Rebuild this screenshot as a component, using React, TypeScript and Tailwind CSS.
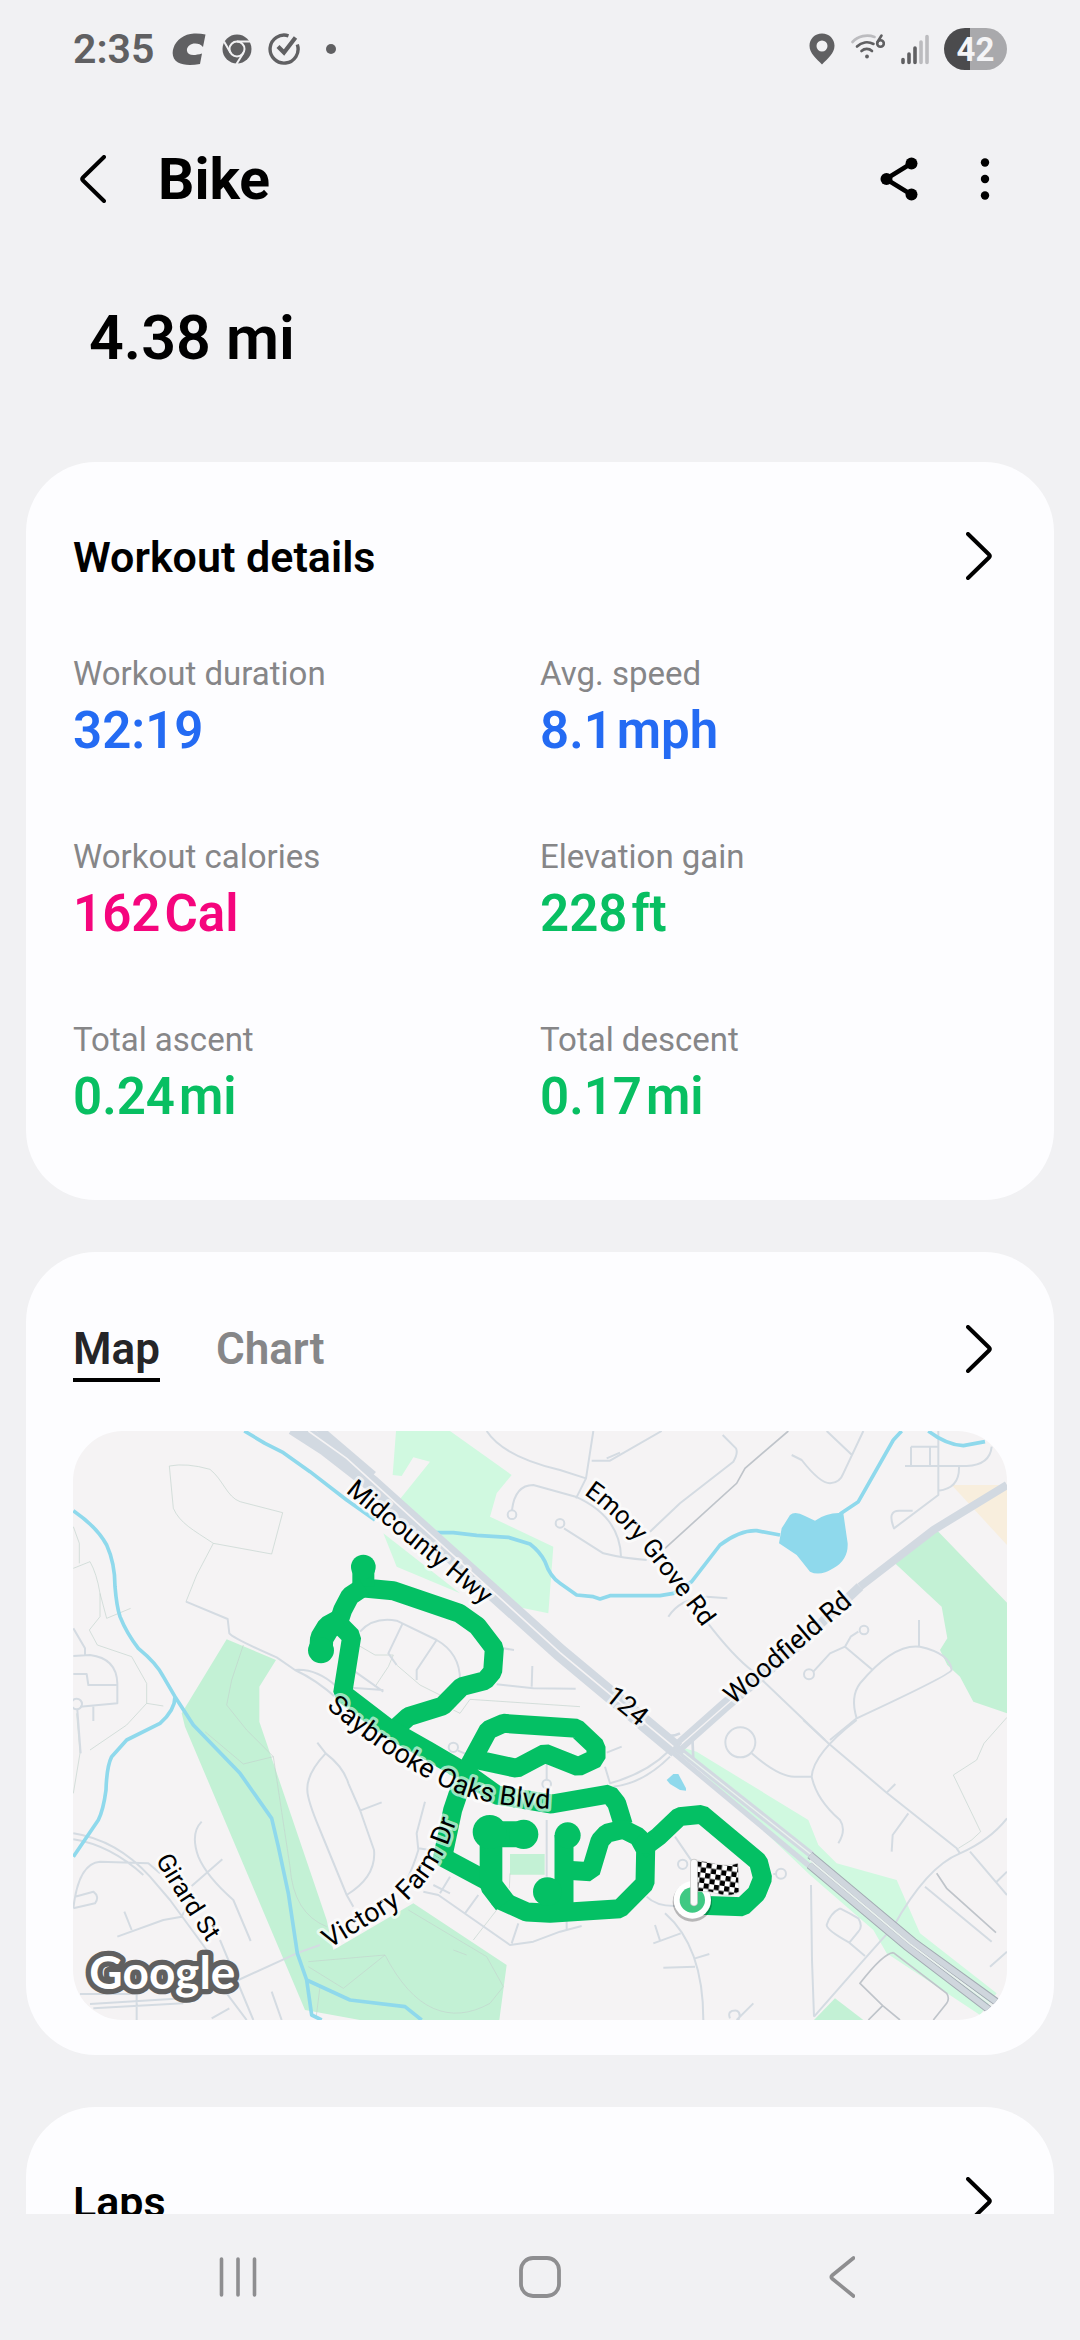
import { useState } from "react";
import type { ReactNode } from "react";

type Stat = { label: string; value: string; unit?: string; color: string };

const stats: Stat[] = [
  { label: "Workout duration", value: "32:19", color: "text-[#246bf3]" },
  { label: "Avg. speed", value: "8.1", unit: "mph", color: "text-[#246bf3]" },
  { label: "Workout calories", value: "162", unit: "Cal", color: "text-[#f5057d]" },
  { label: "Elevation gain", value: "228", unit: "ft", color: "text-[#08bf62]" },
  { label: "Total ascent", value: "0.24", unit: "mi", color: "text-[#08bf62]" },
  { label: "Total descent", value: "0.17", unit: "mi", color: "text-[#08bf62]" },
];

const StatusBar = () => (
  <div className="flex h-[98px] shrink-0 items-center justify-between px-[73px] text-[#606062]">
    <div className="flex items-center">
      <span className="text-[41px] leading-none font-semibold">2:35</span>
      <svg className="ml-[18px] h-8 w-[34px]" viewBox="0 0 34 32" fill="currentColor">
        <path d="M33.500 1.500 31 14C29 11 25 10 21.500 10.500 17 11.500 14.500 14.500 15 18c.8 4.500 6.500 5 15 2.500L28 31c-9 1.500-17 1.300-22-1.500C1 26.500-.5 21 1.500 15 4 7 12 1 22 .5c4-.2 8 .2 11.500 1z" />
      </svg>
      <svg className="ml-4 size-[30px]" viewBox="0 0 30 30" fill="none">
        <circle cx="15" cy="15" r="14.500" fill="currentColor" />
        <circle cx="15" cy="15" r="7.500" stroke="#f1f1f3" strokeWidth="2" />
        <path d="M15 7.500h14M8.500 18.800 2 7.500M21.500 18.800 14.500 30" stroke="#f1f1f3" strokeWidth="2" />
      </svg>
      <svg className="ml-4 size-8" viewBox="0 0 32 32" fill="none" stroke="currentColor" strokeWidth="3.400">
        <path d="M20.500 2.800A14 14 0 1 0 29.300 11.500" />
        <path d="m10 13.500 6 6L27.500 4.500" strokeWidth="4.200" />
      </svg>
      <span className="ml-[26px] size-2.5 rounded-full bg-current" />
    </div>
    <div className="flex items-center">
      <svg className="h-8 w-[26px]" viewBox="0 0 26 32" fill="currentColor">
        <path fillRule="evenodd" d="M13 .5C5.800.5.500 6 .5 12.800.5 20 7.500 26 13 31.500 18.500 26 25.500 20 25.500 12.800 25.500 6 20.200.5 13 .5zm0 7a5.500 5.500 0 1 1 0 11 5.500 5.500 0 0 1 0-11z" />
      </svg>
      <svg className="ml-4 h-8 w-[34px]" viewBox="0 0 34 32" fill="none" stroke="currentColor" strokeWidth="2.600" strokeLinecap="round">
        <path d="M1.500 9C7 3 16 1 23.500 4" stroke="#bcbcbf" />
        <path d="M6 13.500c4.500-4.500 11-5.500 16.500-2.500M10.500 18c3-2.800 7.500-2.800 10.500 0" />
        <circle cx="16" cy="23.500" r="1.900" fill="currentColor" stroke="none" />
        <circle cx="29.500" cy="10.500" r="3.300" />
        <path d="M26.500 9 30.500 2.500" />
      </svg>
      <svg className="ml-4 h-8 w-7" viewBox="0 0 28 32" strokeWidth="3.600" strokeLinecap="round" stroke="currentColor">
        <path d="M2 26.500v3M8 21v8.500M14 15v14.500" />
        <path d="M20 9v20.500M26 3.500v26" stroke="#bcbcbf" />
      </svg>
      <div className="ml-[15px] flex h-[42px] w-[63px] items-center justify-center rounded-full bg-linear-to-r from-[#4b4b4d] from-42% to-[#a9a9ac] to-42% text-[33px] leading-none font-bold text-[#f4f4f6]">
        42
      </div>
    </div>
  </div>
);

const Chevron = () => (
  <svg className="h-12 w-[26px]" viewBox="0 0 26 48" fill="none" stroke="currentColor" strokeWidth="4" strokeLinecap="round" strokeLinejoin="round">
    <path d="M2 2 23 22.500q1.500 1.500 0 3L2 46" />
  </svg>
);

const MoreButton = ({ label }: { label: string }) => (
  <button type="button" aria-label={label} className="flex h-16 items-center pr-[15px] text-black">
    <Chevron />
  </button>
);

const Header = () => (
  <header className="flex h-[162px] shrink-0 items-center pr-[72px] pl-[80px] text-black">
    <button type="button" aria-label="Back" className="rotate-180">
      <Chevron />
    </button>
    <h1 className="ml-[52px] text-[57px] leading-none font-bold">Bike</h1>
    <button type="button" aria-label="Share" className="ml-auto">
      <svg className="h-11 w-[38px]" viewBox="0 0 38 44" fill="currentColor" stroke="currentColor">
        <path d="M6 22 32 6M6 22l26 16" strokeWidth="4.500" fill="none" />
        <circle cx="6.500" cy="22" r="6" stroke="none" />
        <circle cx="31.500" cy="6.500" r="6" stroke="none" />
        <circle cx="31.500" cy="37.500" r="6" stroke="none" />
      </svg>
    </button>
    <button type="button" aria-label="More options" className="mr-[18px] ml-[62px]">
      <svg className="h-11 w-2.5" viewBox="0 0 10 44" fill="currentColor">
        <circle cx="5" cy="5.500" r="4.200" />
        <circle cx="5" cy="22" r="4.200" />
        <circle cx="5" cy="38.500" r="4.200" />
      </svg>
    </button>
  </header>
);

const Card = ({ children, className }: { children: ReactNode; className: string }) => (
  <section className={`mx-[26px] shrink-0 rounded-[70px] bg-[#fdfdff] px-[47px] ${className}`}>{children}</section>
);

const CardTitle = ({ title }: { title: string }) => (
  <div className="flex h-16 items-center justify-between">
    <h2 className="pt-0.5 text-[43px] leading-none font-semibold text-black">{title}</h2>
    <MoreButton label={`Open ${title}`} />
  </div>
);

const labels = [
  { id: "midcounty", text: "Midcounty Hwy", size: 78, d: "M856 216 1165 470 1350 620" },
  { id: "emory", text: "Emory Grove Rd", size: 76, d: "M1571 222Q1670 290 1762 405T1960 665" },
  { id: "woodfield", text: "Woodfield Rd", size: 80, d: "M2020 856 2400 534" },
  { id: "route124", text: "124", size: 80, d: "M1632 836 1760 940" },
  { id: "saybrooke", text: "Saybrooke Oaks Blvd", size: 81, d: "M798 862C900 950 1000 1020 1100 1075S1290 1165 1540 1168" },
  { id: "girard", text: "Girard St", size: 76, d: "M286 1320Q350 1430 470 1610" },
  { id: "victory", text: "Victory Farm Dr", size: 81, d: "M808 1586 1040 1445Q1120 1370 1165 1270L1210 1150" },
];

const RouteMap = () => (
  <svg className="block w-full rounded-[50px] bg-[#f5f3f4]" viewBox="39 33 2802 1767" role="img" aria-label="Workout route map">
    <defs>
      <pattern id="checks" width="31" height="31" patternUnits="userSpaceOnUse" patternTransform="translate(470 424) rotate(8)">
        <rect width="31" height="31" fill="#fff" />
        <path d="M0 0h15.500v15.500H0zM15.500 15.500H31V31H15.500z" fill="#000" />
      </pattern>
    </defs>

    {/* parks */}
    <g fill="#d0f9e0">
      <path d="M1008 33H1170L1355 165 1310 220 1290 290 1480 380 1465 580 1370 560 1120 335 1010 250 1110 125 1060 112 1025 168 998 165z" />
      <path d="M970 340 1200 520 1010 440 1000 415z" />
      <path d="M1840 975 1910 995 2245 1200 2275 1275 2330 1330 2510 1380 2580 1540 2810 1720 2760 1785 2480 1600 2440 1530 2250 1365z" />
    </g>
    <g fill="#c3f1d5">
      <path d="M500 658 648 720 598 800V905L800 1500 820 1590 1060 1450 1340 1635 1318 1800H900L735 1770 375 920 365 880z" />
      <path d="M2622 322 2841 548V880L2740 845 2700 770 2662 735 2640 690 2662 655 2645 560 2500 425z" />
      <path d="M2325 1735 2410 1800H2262z" />
      <path d="M1350 1302h104v62H1350z" />
    </g>
    <path d="M2675 195H2841V375z" fill="#f8eedd" />

    {/* footpaths */}
    <g fill="none" stroke="#c3d3cd" strokeWidth="2">
      <path d="M328 138Q380 128 450 148C490 180 500 230 540 245L668 278 635 402 460 370C400 330 360 310 340 265L328 138M460 370 410 465 378 545" />
      <path d="M40 445 90 425Q110 460 120 520L140 595 212 565M120 520V590L88 630 112 675 215 710 260 790V850L200 915 90 990M260 850 310 858" />
      <path d="M550 675 515 780 500 855 560 930 640 1010 550 1032 435 935M640 1010 690 1340Q700 1480 800 1520" />
      <path d="M745 1625 975 1605Q1040 1730 1120 1765T1290 1750L1330 1700 1280 1610 1045 1470M745 1640 850 1705 975 1605M1180 1590 1220 1605M780 1700 768 1795" />
      <path d="M885 670 945 705H1000L985 740 945 800M1010 735 1080 795 1140 825M1180 870 1200 880 1230 838 1560 860" />
      <path d="M2841 892 2772 970 2750 1020 2680 1065 2762 1235 2735 1260 2695 1285" />
      <path d="M1348 1405 1350 1360M1240 1560 1310 1470M40 320 58 370V430M40 1120 60 1000 50 880" />
    </g>

    {/* streets */}
    <g fill="none" stroke="#d4dbe2" strokeWidth="6" strokeLinejoin="round">
      <path d="M378 545 503 597 508 640Q520 655 650 712L705 750Q770 745 830 800L970 810M705 750Q770 780 830 835M885 755 970 815" />
      <path d="M900 635Q940 590 1010 602L1130 660Q1200 700 1200 780M1028 610 985 700 1010 735M1130 660 1070 750V780M1330 685 1362 690M1310 793 1420 805 1547 806M1417 738 1415 800" />
      <path d="M40 708 90 705Q170 715 172 790V850L60 860M40 762H80L85 795H172M100 860V903M40 625 75 685V705M52 870 62 1000" />
      <circle cx="50" cy="852" r="16" />
      <path d="M1280 33Q1330 110 1500 150L1578 175M1356 270Q1365 195 1420 195L1547 230Q1680 290 1683 410M1548 235 1578 175 1600 33M1595 122H1650L1805 33" />
      <circle cx="1356" cy="284" r="13" />
      <circle cx="1500" cy="310" r="13" />
      <path d="M1512 325 1630 400Q1690 415 1760 420M1988 45 2028 85Q2035 100 2020 125L1860 250 1770 335M2195 105 2225 120Q2280 190 2310 190 2340 188 2350 160L2410 33M2300 33 2376 105" />
      <path d="M1825 590Q1860 535 1940 530L2002 535M1940 605Q2020 710 2080 755L2295 960M2535 138H2720Q2790 135 2795 80M2553 80h82v58M2553 80v58M2610 80v58M2635 33V225L2502 325Q2480 270 2520 272H2558M2697 138Q2700 205 2635 212" />
      <path d="M2260 755 2310 700 2355 680 2438 750M2355 680 2372 650 2395 635M2310 960 2390 895Q2370 830 2400 790 2500 670 2580 680 2670 700 2675 750 2670 765 2390 895M2577 680V600" />
      <circle cx="2247" cy="763" r="15" />
      <circle cx="2412" cy="630" r="13" />
      <circle cx="2041" cy="967" r="45" />
      <path d="M2075 1000Q2160 1075 2210 1070H2255M2230 900 2305 970 2480 1118 2690 1285 2700 1300M2480 1118 2506 1092M2390 900Q2260 1000 2255 1070 2270 1140 2340 1200 2360 1230 2335 1270M2545 1180 2498 1245 2495 1295" />
      <path d="M2841 1195Q2790 1260 2700 1300 2600 1340 2500 1520L2420 1610 2262 1790M2253 1395 2256 1620 2262 1790M2595 1400 2795 1565M2730 1295 2841 1425M2790 1640 2841 1595M2810 1385 2841 1355" />
      <path d="M2340 1465Q2370 1480 2395 1495 2410 1520 2395 1535L2368 1568Q2300 1530 2300 1515 2310 1480 2340 1465M2368 1568 2415 1608M1680 98 1640 115" />
      <path d="M1685 980 1640 998M1635 1040 1650 1090Q1760 1060 1830 990M1660 1100Q1750 1090 1830 1010M1845 1250 1900 1330M1760 1430Q1790 1460 1850 1458M1815 1480Q1930 1580 1930 1800M1785 1515 1800 1562M1780 1570 1862 1540M1905 1615 1948 1602M1810 1643 1905 1640" />
      <circle cx="1868" cy="1333" r="14" />
      <circle cx="2163" cy="1361" r="15" />
      <path d="M2140 1362h8M1460 1030V1080M1460 1200V1370M2080 1750 2030 1800M2010 1795Q2000 1770 2030 1772 2045 1780 2035 1800" />
      <circle cx="1460" cy="1092" r="13" />
      <circle cx="1180" cy="982" r="14" />
      <path d="M1194 992 1225 1005M772 968 797 1000Q740 1060 742 1110 742 1140 780 1230L860 1425 880 1460M797 1000Q850 1040 865 1090L900 1170 942 1290Q950 1370 860 1425M900 1172 965 1147M1095 1145 1070 1240 1075 1290Q1060 1340 1040 1380M1075 1285 1110 1290" />
      <path d="M1090 1415 1135 1425 1350 1575 1420 1565 1500 1535 1565 1518M1140 1420 1170 1370M1215 1480 1255 1425M1355 1570 1375 1510M1120 1395 1170 1420M1520 1500V1530" />
      <path d="M40 1240Q170 1260 270 1370L330 1440 440 1590 500 1720 560 1800M40 1258Q150 1275 250 1365M480 1560 580 1800M40 1465Q55 1330 120 1325L265 1330 300 1360M40 1465 105 1450Q120 1430 100 1415L45 1430M193 1475 215 1530M172 1550 310 1500 365 1490 400 1420M425 1205Q390 1240 415 1310 440 1370 520 1440L572 1563M395 1398 487 1318M535 1680 715 1598 780 1575" />
      <path d="M60 1722H230V1800M100 1765 370 1750M90 1752 370 1735M635 1715 665 1800M455 1795 508 1765" />
    </g>
    <g fill="none" stroke="#bfc4ca" strokeWidth="5">
      <path d="M2185 33 2055 145 2030 190 1815 385M2630 1360 2660 1405 2808 1538M2500 1598Q2470 1600 2400 1690L2468 1757 2520 1800M2500 1598 2660 1720Q2670 1735 2660 1750L2620 1800M2468 1757 2425 1800" />
    </g>

    {/* water */}
    <g fill="none" stroke="#8fd9ec" strokeWidth="11" strokeLinejoin="round">
      <path d="M553 33 615 70 670 98 750 155 860 240 945 300M1115 338 1180 338 1250 346 1345 352 1410 372Q1440 395 1455 425 1470 470 1500 490L1550 525 1600 530 1620 537 1650 527H1800L1840 520 1895 485 1980 375Q2040 330 2090 332L2160 345M2340 282 2395 245 2500 60 2525 33M2605 33Q2660 75 2710 77L2775 65" />
      <path d="M40 272Q110 320 140 375 165 430 165 500 170 560 180 590 200 640 235 685 290 730 310 770L345 830 400 915 540 1060 635 1195 655 1280 685 1420 712 1600 740 1680 755 1785 785 1800M345 830Q345 870 300 910L200 960 155 1010Q140 1040 138 1110 130 1170 115 1200L40 1310M740 1680 870 1740 1035 1760 1085 1800" />
    </g>
    <g fill="#8fd9ec">
      <path d="M2190 285Q2205 272 2235 288L2265 302Q2305 275 2350 280L2363 370Q2365 420 2320 445 2280 470 2250 455 2230 430 2210 405L2157 370 2165 325z" />
      <path d="M1820 1080 1840 1062H1855L1878 1105V1112L1860 1110 1830 1092z" />
    </g>

    {/* highways */}
    <g fill="none" stroke="#d2d9e1">
      <path d="M2841 195 2620 330 2400 500" strokeWidth="24" />
      <path d="M2400 500 2240 650" strokeWidth="28" />
      <path d="M2240 650 1990 860 1850 985" strokeWidth="38" />
      <path d="M2040 818 1855 980" stroke="#f5f3f4" strokeWidth="4" />
      <path d="M1897 950 1900 1020M1800 940Q1830 955 1860 940" strokeWidth="8" />
      <path d="M700 20 800 85 935 190 1500 698 1850 990" strokeWidth="50" />
      <path d="M770 20 940 165" strokeWidth="24" />
      <path d="M745 33 860 115 1500 698 1840 980" stroke="#f5f3f4" strokeWidth="5" />
      <path d="M1845 980 2255 1305" strokeWidth="22" />
      <path d="M1870 1000 2255 1305" stroke="#eaf3ee" strokeWidth="4" />
      <path d="M1830 990 2250 1340" strokeWidth="16" />
      <path d="M2250 1305 2560 1565 2815 1750M2248 1335 2540 1580 2795 1775" stroke="#a3abb3" strokeWidth="24" />
      <path d="M2250 1305 2560 1565 2815 1750M2248 1335 2540 1580 2795 1775" stroke="#cfd6dd" strokeWidth="18" />
      <path d="M2249 1320 2550 1572 2805 1762" stroke="#e9f0ee" strokeWidth="5" />
    </g>

    {/* recorded route */}
    <g fill="none" stroke="#04c064" strokeWidth="57" strokeLinejoin="bevel">
      <path d="M910 440 912 504 1000 512 1198 580 1252 618 1303 685 1298 755 1275 782 1205 800 1148 858 1045 890 985 945" />
      <path d="M910 440V500" strokeWidth="66" />
      <path d="M912 500 870 528 848 570 835 610 875 650 848 820 985 925 1100 990 1220 1060 1310 1125 1475 1152 1648 1122 1670 1150 1690 1215" />
      <path d="M845 600 805 622 785 655 783 690" strokeWidth="70" />
      <path d="M1145 1325 1178 1170 1215 1060 1285 930 1330 910 1550 925 1608 980 1608 1015 1555 1040 1455 1000 1370 1045 1230 1015" />
      <path d="M1145 1310 1295 1390 1320 1440 1400 1476 1470 1480 1680 1466 1755 1390 1757 1290 1735 1250 1690 1228 1640 1240 1620 1262 1592 1355 1510 1350" />
      <path d="M1293 1230V1395L1335 1450" strokeWidth="68" />
      <path d="M1285 1243H1390" strokeWidth="78" />
      <path d="M1465 1415H1530" strokeWidth="74" />
      <path d="M1512 1245V1470" />
      <path d="M1740 1290 1795 1250 1858 1190 1925 1183 2095 1325 2108 1375 2090 1420 2048 1460 1900 1455" />
    </g>
    <g fill="#04c064">
      <circle cx="910" cy="441" r="37" />
      <circle cx="783" cy="691" r="39" />
      <circle cx="1289" cy="1236" r="51" />
      <circle cx="1391" cy="1243" r="44" />
      <circle cx="1523" cy="1246" r="39" />
      <circle cx="1462" cy="1415" r="43" />
      <circle cx="1755" cy="1272" r="30" />
    </g>

    {/* street names */}
    <g fill="#000" stroke="#fff" strokeOpacity=".62" strokeWidth="18" strokeLinejoin="round" style={{ paintOrder: "stroke" }}>
      {labels.map(({ id, text, size, d }) => (
        <g key={id}>
          <path id={id} d={d} fill="none" stroke="none" />
          <text fontSize={size}>
            <textPath href={`#${id}`}>{text}</textPath>
          </text>
        </g>
      ))}
    </g>

    {/* finish marker */}
    <g transform="translate(1440 900)">
      <circle cx="457" cy="546" r="59" fill="#000" fillOpacity=".25" />
      <circle cx="457" cy="540" r="56" fill="#fff" />
      <circle cx="457" cy="540" r="38" fill="#3fc983" />
      <path d="M468 420Q500 425 530 433 565 440 594 430L597 515Q580 530 545 524 510 512 470 514z" fill="url(#checks)" stroke="#d5d5d5" strokeWidth="2" />
      <path d="M462 428V547" stroke="#cdcdcd" strokeWidth="23" strokeLinecap="round" />
      <path d="M462 428V547" stroke="#fafafa" strokeWidth="18" strokeLinecap="round" />
    </g>

    <text x="88" y="1707" fontSize="138" fontFamily="Lato, sans-serif" fontWeight="700" fill="#fff" stroke="#606060" strokeWidth="32" strokeLinejoin="round" style={{ paintOrder: "stroke" }}>
      Google
    </text>
  </svg>
);

const tabs = ["Map", "Chart"];

const MapCard = () => {
  const [active, setActive] = useState("Map");
  return (
    <Card className="mt-[52px] pt-16 pb-[35px]">
      <div className="flex h-[66px] items-center justify-between">
        <div role="tablist" className="flex h-full gap-14">
          {tabs.map((tab) => (
            <button
              key={tab}
              type="button"
              role="tab"
              aria-selected={tab === active}
              onClick={() => setActive(tab)}
              className={`h-full border-b-4 pt-1 text-[44px] leading-none font-semibold ${
                tab === active ? "border-black text-[#252528]" : "border-transparent text-[#868688]"
              }`}
            >
              {tab}
            </button>
          ))}
        </div>
        <MoreButton label="Open map" />
      </div>
      <div className="mt-[49px]">
        <RouteMap />
      </div>
    </Card>
  );
};

const NavBar = () => (
  <nav className="grid h-[126px] shrink-0 grid-cols-3 items-center justify-items-center bg-[#f1f1f3] px-[87px] text-[#8e8e90]">
    <button type="button" aria-label="Recents">
      <svg className="h-[42px] w-10" viewBox="0 0 40 42" stroke="currentColor" strokeWidth="3.600" strokeLinecap="round">
        <path d="M3.500 3v36M20 3v36M36.500 3v36" />
      </svg>
    </button>
    <button type="button" aria-label="Home">
      <svg className="size-[42px]" viewBox="0 0 42 42" fill="none" stroke="currentColor" strokeWidth="3.800">
        <rect x="2" y="2" width="38" height="38" rx="12" />
      </svg>
    </button>
    <button type="button" aria-label="Back">
      <svg className="h-[42px] w-[26px]" viewBox="0 0 26 42" fill="none" stroke="currentColor" strokeWidth="3.600" strokeLinecap="round" strokeLinejoin="round">
        <path d="M24.500 2 3 19.500q-1.500 1.500 0 3L24.500 40" />
      </svg>
    </button>
  </nav>
);

export default function App() {
  return (
    <div className="flex h-screen flex-col overflow-hidden bg-[#f1f1f3] font-[Roboto,'Noto_Sans',sans-serif]">
      <StatusBar />
      <Header />
      <main className="flex min-h-0 flex-1 flex-col overflow-x-hidden overflow-y-auto [scrollbar-width:none]">
        <p className="px-[89px] pt-[42px] pb-[88px] text-[61px] leading-[72px] font-semibold text-black">4.38 mi</p>
        <Card className="pt-[62px] pb-[69px]">
          <CardTitle title="Workout details" />
          <dl className="mt-[63px] grid grid-cols-2 gap-y-[69px]">
            {stats.map(({ label, value, unit, color }) => (
              <div key={label}>
                <dt className="text-[33px] leading-[46px] text-[#868688]">{label}</dt>
                <dd className={`flex gap-1 text-[51px] leading-[68px] font-semibold ${color}`}>
                  <span>{value}</span>
                  {unit && <span>{unit}</span>}
                </dd>
              </div>
            ))}
          </dl>
        </Card>
        <MapCard />
        <Card className="mt-[52px] pt-[62px] pb-16">
          <CardTitle title="Laps" />
        </Card>
      </main>
      <NavBar />
    </div>
  );
}
